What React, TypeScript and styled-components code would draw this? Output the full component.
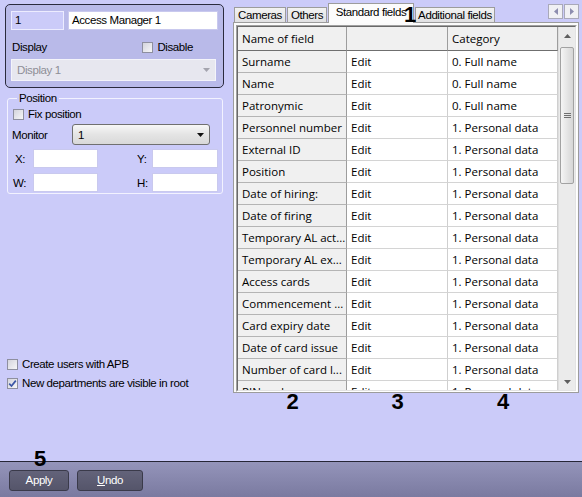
import React from 'react';
import styled, { createGlobalStyle } from 'styled-components';

interface Field {
  name: string;
  editor: string;
  category: string;
}

const fields: Field[] = [
  { name: 'Surname', editor: 'Edit', category: '0. Full name' },
  { name: 'Name', editor: 'Edit', category: '0. Full name' },
  { name: 'Patronymic', editor: 'Edit', category: '0. Full name' },
  { name: 'Personnel number', editor: 'Edit', category: '1. Personal data' },
  { name: 'External ID', editor: 'Edit', category: '1. Personal data' },
  { name: 'Position', editor: 'Edit', category: '1. Personal data' },
  { name: 'Date of hiring:', editor: 'Edit', category: '1. Personal data' },
  { name: 'Date of firing', editor: 'Edit', category: '1. Personal data' },
  { name: 'Temporary AL act...', editor: 'Edit', category: '1. Personal data' },
  { name: 'Temporary AL ex...', editor: 'Edit', category: '1. Personal data' },
  { name: 'Access cards', editor: 'Edit', category: '1. Personal data' },
  { name: 'Commencement ...', editor: 'Edit', category: '1. Personal data' },
  { name: 'Card expiry date', editor: 'Edit', category: '1. Personal data' },
  { name: 'Date of card issue', editor: 'Edit', category: '1. Personal data' },
  { name: 'Number of card l...', editor: 'Edit', category: '1. Personal data' },
  { name: 'PIN-code', editor: 'Edit', category: '1. Personal data' },
];

const tabs = ['Cameras', 'Others', 'Standard fields', 'Additional fields'];
const tabWidths = [52, 40, 86, 80];
const colWidths = [109, 101, 110];

const UI_FONT = `"Liberation Sans", Arial, sans-serif`;
const GRID_FONT = `"Open Sans", "Noto Sans", sans-serif`;

const GlobalStyle = createGlobalStyle`
* { box-sizing: border-box; }
html, body {
  margin: 0;
  background: #cbcbf9;
}
body {
  font-family: ${UI_FONT};
  font-size: 11.5px;
  letter-spacing: -0.4px;
  color: #000;
}
`

const Screen = styled.div`
width: 582px;
height: 497px;
display: flex;
flex-direction: column;
overflow: hidden;
`

const Workspace = styled.div`
height: 461px;
display: flex;
`

const Sidebar = styled.div`
width: 233px;
display: flex;
flex-direction: column;
padding-bottom: 69px;
`

const ObjectPanel = styled.div`
margin: 4px 0 0 5px;
width: 219px;
height: 84px;
border: 1px solid #2b2b3e;
border-radius: 5px;
background: #b9bae9;
padding: 6px 5px 0 5px;
`

const InputRow = styled.div`
display: flex;
gap: 4px;
`

const TextBox = styled.div<{ $w: number; $h?: number; $tint?: boolean }>`
width: ${p => p.$w}px;
height: ${p => p.$h ?? 19}px;
background: ${p => (p.$tint ? '#cbcbf9' : '#fff')};
border: 1px solid ${p => (p.$tint ? '#ececff' : '#c9c9ee')};
padding: 0 3px;
line-height: ${p => (p.$h ?? 19) - 2}px;
white-space: nowrap;
`

const LabelRow = styled.div`
display: flex;
align-items: center;
height: 18px;
margin-top: 8px;
padding-left: 1px;
`

const DisableWrap = styled.div`
margin-left: auto;
margin-right: 25px;
`

const Select = styled.div<{ $disabled?: boolean; $w: number; $h: number }>`
width: ${p => p.$w}px;
height: ${p => p.$h}px;
display: flex;
align-items: center;
justify-content: space-between;
padding: 0 5px 0 5px;
border: 1px solid ${p => (p.$disabled ? '#f4f4fa' : '#707070')};
border-radius: ${p => (p.$disabled ? 0 : 3)}px;
background: ${p => (p.$disabled ? '#e7e7ef' : 'linear-gradient(#f7f7f7, #e4e4e4 50%, #d9d9d9)')};
color: ${p => (p.$disabled ? '#8e8e96' : '#000')};
`

const DisplaySelect = styled(Select)`
margin-top: 3px;
`

const GroupBox = styled.fieldset`
margin: 3px 0 0 7px;
width: 216px;
height: 103px;
border: 1px solid #f2f2ff;
border-radius: 3px;
padding: 0 4px 0 4px;
min-width: 0;
`

const Legend = styled.legend`
padding: 0 2px;
margin-left: 5px;
line-height: 14px;
`

const CheckRow = styled.label<{ $indent?: number }>`
display: flex;
align-items: center;
gap: 4px;
height: 18px;
padding-left: ${p => p.$indent ?? 0}px;
white-space: nowrap;
`

const Box = styled.span`
width: 11px;
height: 11px;
flex: none;
display: flex;
align-items: center;
justify-content: center;
border: 1px solid #8e8f9f;
background: linear-gradient(135deg, #d4d4dc, #f6f6f8);
`

const MonitorRow = styled.div`
display: flex;
align-items: center;
margin-top: 1px;
`

const MonitorLabel = styled.span`
width: 60px;
`

const CoordGrid = styled.div`
display: grid;
grid-template-columns: 21px 65px 1fr 15px 66px;
row-gap: 5px;
margin-top: 4px;
align-items: center;
`

const CoordLabel = styled.span<{ $pad?: number }>`
padding-left: ${p => p.$pad ?? 0}px;
`

const Flag = styled.div`
margin-top: auto;
display: flex;
flex-direction: column;
gap: 1px;
`

const RightSide = styled.div`
position: relative;
flex: 1;
display: flex;
flex-direction: column;
`

const TabStrip = styled.div`
height: 22px;
display: flex;
align-items: flex-end;
padding-left: 1px;
padding-right: 3px;
`

const Tab = styled.div<{ $active?: boolean; $w: number }>`
position: relative;
width: ${p => p.$w}px;
height: ${p => (p.$active ? 20 : 15)}px;
margin-right: 1px;
margin-bottom: ${p => (p.$active ? -1 : 0)}px;
z-index: ${p => (p.$active ? 2 : 1)};
border: 1px solid #9c9c9c;
border-bottom: none;
background: ${p => (p.$active ? '#fcfcfc' : 'linear-gradient(#f2f2f2, #e1e1e3)')};
text-align: center;
line-height: ${p => (p.$active ? 17 : 14)}px;
white-space: nowrap;
`

const TabScroll = styled.div`
margin-left: auto;
align-self: flex-start;
margin-top: 4px;
display: flex;
gap: 1px;
`

const ScrollKey = styled.div`
width: 15px;
height: 15px;
display: flex;
align-items: center;
justify-content: center;
border: 1px solid #a9a9b9;
background: #f0f0f4;
`

const TabPanel = styled.div`
width: 346px;
height: 371px;
border: 1px solid #9c9c9c;
background: #fbfbfb;
padding: 2px 1px 0 2px;
`

const SunkenOuter = styled.div`
height: 100%;
border: 1px solid;
border-color: #a0a0a0 #ffffff #ffffff #a0a0a0;
`

const SunkenInner = styled.div`
height: 100%;
display: flex;
border: 1px solid;
border-color: #696969 #e3e3e3 #e3e3e3 #696969;
overflow: hidden;
`

const GridArea = styled.div`
width: 320px;
font-family: ${GRID_FONT};
font-size: 11.5px;
letter-spacing: 0;
overflow: hidden;
`

const GridRow = styled.div<{ $header?: boolean }>`
display: grid;
grid-template-columns: ${colWidths.map(w => w + 'px').join(' ')};
height: ${p => (p.$header ? 24 : 22)}px;
`

const Cell = styled.div<{ $shade?: boolean; $header?: boolean }>`
padding-left: 4px;
background: ${p => (p.$shade ? '#f0f0f0' : '#fff')};
border-right: 1px solid ${p => (p.$shade || p.$header ? '#9d9d9d' : '#cfcfcf')};
border-bottom: 1px solid ${p => (p.$header ? '#6f6f6f' : p.$shade ? '#b4b4b4' : '#d4d4d4')};
line-height: ${p => (p.$header ? 23 : 21)}px;
white-space: nowrap;
overflow: hidden;
`

const VScroll = styled.div`
width: 17px;
display: flex;
flex-direction: column;
background: #ebebeb;
border-left: 1px solid #dedede;
`

const ScrollArrow = styled.div`
height: 17px;
flex: none;
display: flex;
align-items: center;
justify-content: center;
`

const Thumb = styled.div`
margin: 3px 1px 0 1px;
height: 137px;
flex: none;
display: flex;
align-items: center;
justify-content: center;
border: 1px solid #a2a2a2;
border-radius: 2px;
background: linear-gradient(to right, #f5f5f5, #e2e2e2 60%, #d6d6d6);
`

const Track = styled.div`
flex: 1;
`

const CalloutRow = styled.div`
display: flex;
padding-left: 5px;
`

const Callout = styled.span<{ $w?: number }>`
width: ${p => (p.$w ? p.$w + 'px' : 'auto')};
font-family: "Liberation Sans", Arial, sans-serif;
font-weight: 700;
font-size: 22px;
letter-spacing: 0;
line-height: 18px;
text-align: center;
`

const TabCallout = styled(Callout)`
position: absolute;
left: 171px;
top: 6px;
z-index: 3;
`

const ApplyCallout = styled(Callout)`
position: absolute;
left: 34px;
top: -12px;
`

const BottomBar = styled.div`
position: relative;
height: 36px;
border-top: 1px solid #262636;
background: linear-gradient(#9494ba, #7a7aa0);
display: flex;
gap: 8px;
padding: 8px 0 0 9px;
`

const Button = styled.div<{ $w: number }>`
width: ${p => p.$w}px;
height: 21px;
border: 1px solid #3a3a4a;
border-radius: 3px;
background: linear-gradient(#63637a, #55556a);
color: #fff;
text-align: center;
line-height: 19px;
`

const Hotkey = styled.span`
text-decoration: underline;
`

function Check({ checked }: { checked?: boolean }) {
  return (
    <Box>
      {checked && (
        <svg width="9" height="9" viewBox="0 0 9 9">
          <path d="M1.2 4.6 L3.5 7 L7.8 1.6" fill="none" stroke="#3b56a6" strokeWidth="1.7" />
        </svg>
      )}
    </Box>
  );
}

function Caret({ color, dir = 'down' }: { color: string; dir?: 'down' | 'up' | 'left' | 'right' }) {
  const paths = {
    down: 'M0 0h7L3.5 4z',
    up: 'M0 4h7L3.5 0z',
    left: 'M4 0v7L0 3.5z',
    right: 'M0 0v7L4 3.5z',
  };
  const vertical = dir === 'down' || dir === 'up';
  return (
    <svg width={vertical ? 7 : 4} height={vertical ? 4 : 7} viewBox={vertical ? '0 0 7 4' : '0 0 4 7'}>
      <path d={paths[dir]} fill={color} />
    </svg>
  );
}

export default function App() {
  return (
    <Screen>
      <GlobalStyle />
      <Workspace>
        <Sidebar>
          <ObjectPanel>
            <InputRow>
              <TextBox $w={53} $tint>1</TextBox>
              <TextBox $w={150}>Access Manager 1</TextBox>
            </InputRow>
            <LabelRow>
              Display
              <DisableWrap>
                <CheckRow>
                  <Check />
                  Disable
                </CheckRow>
              </DisableWrap>
            </LabelRow>
            <DisplaySelect $disabled $w={205} $h={22}>
              Display 1
              <Caret color="#a4a4ae" />
            </DisplaySelect>
          </ObjectPanel>

          <GroupBox>
            <Legend>Position</Legend>
            <CheckRow $indent={1}>
              <Check />
              Fix position
            </CheckRow>
            <MonitorRow>
              <MonitorLabel>Monitor</MonitorLabel>
              <Select $w={138} $h={21}>
                1
                <Caret color="#111" />
              </Select>
            </MonitorRow>
            <CoordGrid>
              <CoordLabel $pad={3}>X:</CoordLabel>
              <TextBox $w={65} />
              <span />
              <CoordLabel>Y:</CoordLabel>
              <TextBox $w={66} />
              <CoordLabel $pad={1}>W:</CoordLabel>
              <TextBox $w={65} />
              <span />
              <CoordLabel>H:</CoordLabel>
              <TextBox $w={66} />
            </CoordGrid>
          </GroupBox>

          <Flag>
            <CheckRow $indent={7}>
              <Check />
              Create users with APB
            </CheckRow>
            <CheckRow $indent={7}>
              <Check checked />
              New departments are visible in root
            </CheckRow>
          </Flag>
        </Sidebar>

        <RightSide>
          <TabStrip>
            {tabs.map((t, i) => (
              <Tab key={t} $w={tabWidths[i]} $active={i === 2}>
                {t}
              </Tab>
            ))}
            <TabScroll>
              <ScrollKey>
                <Caret color="#8d8daf" dir="left" />
              </ScrollKey>
              <ScrollKey>
                <Caret color="#8d8daf" dir="right" />
              </ScrollKey>
            </TabScroll>
          </TabStrip>
          <TabCallout>1</TabCallout>

          <TabPanel>
            <SunkenOuter>
              <SunkenInner>
                <GridArea>
                  <GridRow $header>
                    <Cell $header $shade>Name of field</Cell>
                    <Cell $header $shade />
                    <Cell $header $shade>Category</Cell>
                  </GridRow>
                  {fields.map((f, i) => (
                    <GridRow key={i}>
                      <Cell $shade>{f.name}</Cell>
                      <Cell>{f.editor}</Cell>
                      <Cell>{f.category}</Cell>
                    </GridRow>
                  ))}
                </GridArea>
                <VScroll>
                  <ScrollArrow>
                    <Caret color="#5e5e5e" dir="up" />
                  </ScrollArrow>
                  <Thumb>
                    <svg width="7" height="6" viewBox="0 0 7 6">
                      <path d="M0 0.5h7M0 2.5h7M0 4.5h7" stroke="#707070" strokeWidth="1" />
                    </svg>
                  </Thumb>
                  <Track />
                  <ScrollArrow>
                    <Caret color="#5e5e5e" />
                  </ScrollArrow>
                </VScroll>
              </SunkenInner>
            </SunkenOuter>
          </TabPanel>

          <CalloutRow>
            {['2', '3', '4'].map((n, i) => (
              <Callout key={n} $w={colWidths[i]}>{n}</Callout>
            ))}
          </CalloutRow>
        </RightSide>
      </Workspace>

      <BottomBar>
        <ApplyCallout>5</ApplyCallout>
        <Button $w={60}>Apply</Button>
        <Button $w={66}>
          <Hotkey>U</Hotkey>ndo
        </Button>
      </BottomBar>
    </Screen>
  );
}
